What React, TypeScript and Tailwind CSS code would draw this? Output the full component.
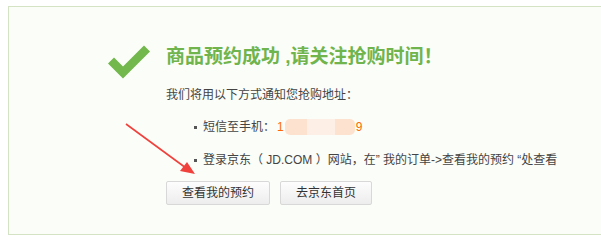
export default function App() {
  return (
    <div className="relative w-[601px] h-[243px] bg-white overflow-hidden pt-[6px] pl-[8px]" style={{ fontFamily: '"Liberation Sans", "Noto Sans CJK SC", sans-serif' }}>
      <div className="h-[229px] border-l border-t border-b border-[#d4e3c4] bg-[#fbfdf8] flex pl-[99px] pt-[38px]">
        {/* check mark */}
        <svg width="44" height="34" viewBox="0 0 44 34" className="shrink-0 mt-[0px]">
          <polyline points="3,15.5 15,27.5 39,3.5" fill="none" stroke="#72b84d" strokeWidth="8.5" />
        </svg>

        <div className="ml-[14px] flex flex-col text-[#444]">
          <h1 className="text-[19px] leading-[22px] font-bold text-[#6fb44c] mt-[1px]">
            商品预约成功 ,请关注抢购时间！
          </h1>
          <p className="text-[12px] leading-[20px] mt-[17px]">我们将用以下方式通知您抢购地址：</p>

          <ul className="pl-[28px] text-[12px] leading-[20px]">
            <li className="flex items-center mt-[12px]">
              <span className="w-[3px] h-[3px] bg-[#555] mr-[6px]" />
              <span>短信至手机：</span>
              <span className="text-[#ff6a00] ml-[2px]">1</span>
              <span className="flex h-[16px] mx-[1px] rounded-[5px] overflow-hidden">
                <span className="w-[22px] bg-[#fde3cf]" />
                <span className="w-[28px] bg-[#fdefe5]" />
                <span className="w-[20px] bg-[#fde3cf]" />
              </span>
              <span className="text-[#ff6a00]">9</span>
            </li>
            <li className="flex items-center mt-[13px]">
              <span className="w-[3px] h-[3px] bg-[#555] mr-[6px]" />
              <span>登录京东（ JD.COM ）网站，在” 我的订单-&gt;查看我的预约 “处查看</span>
            </li>
          </ul>

          <div className="flex gap-[10px] mt-[11px]">
            <button className="w-[104px] h-[24px] border border-[#d8d8d8] rounded-[2px] bg-gradient-to-b from-[#fdfdfd] to-[#ededed] text-[12px] text-[#333]">
              查看我的预约
            </button>
            <button className="w-[92px] h-[24px] border border-[#d8d8d8] rounded-[2px] bg-gradient-to-b from-[#fdfdfd] to-[#ededed] text-[12px] text-[#333]">
              去京东首页
            </button>
          </div>
        </div>
      </div>

      {/* annotation arrow */}
      <svg className="absolute left-0 top-0 pointer-events-none" width="601" height="243">
        <line x1="126" y1="124" x2="186" y2="168" stroke="#f0413c" strokeWidth="1.6" />
        <polygon points="195,174 180,171 187,162" fill="#f0413c" />
      </svg>
    </div>
  );
}
